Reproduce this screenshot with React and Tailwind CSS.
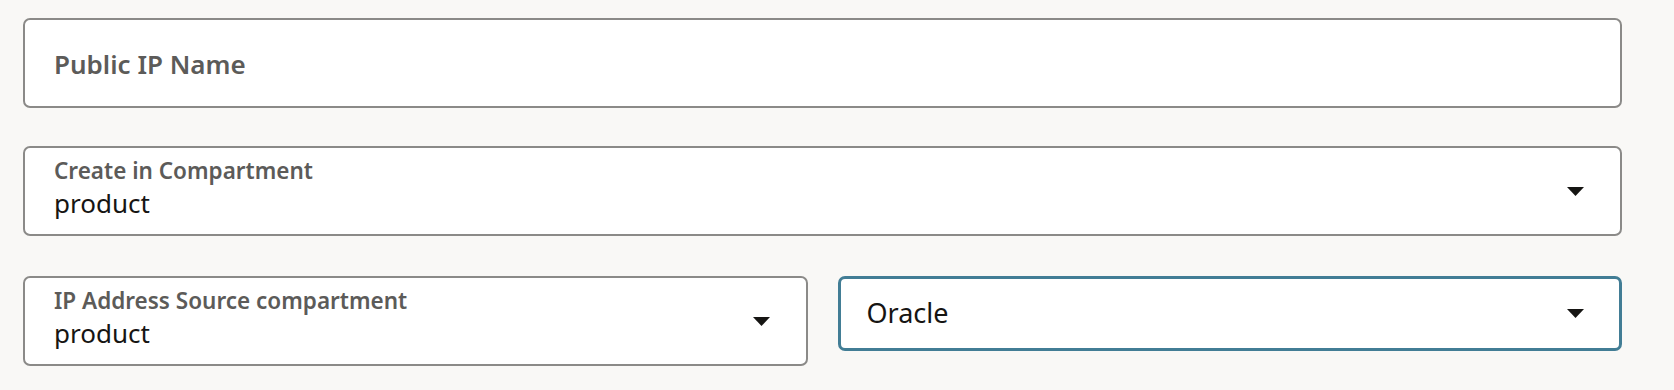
import React from 'react';

const font = { fontFamily: '"Noto Sans", "Open Sans", sans-serif' };

function Caret() {
  return (
    <svg width="17" height="9" viewBox="0 0 17 9" className="shrink-0">
      <path d="M0 0 L17 0 L8.5 9 Z" fill="#161513" />
    </svg>
  );
}

function SelectField({ label, value, className = '' }) {
  return (
    <div className={`h-[90px] bg-white border-2 border-[#8b8a88] rounded-[7px] flex items-center justify-between pl-[29px] pr-[36px] ${className}`}>
      <div className="flex flex-col pb-[9px]">
        <span className="text-[22.5px] leading-[33px] font-semibold text-[#5c5b59]">{label}</span>
        <span className="text-[26px] leading-[32px] text-[#161513]">{value}</span>
      </div>
      <Caret />
    </div>
  );
}

export default function App() {
  return (
    <div className="min-h-[390px] w-full bg-[#f9f8f6] pl-[23px] pr-[52px] pt-[18px]" style={font}>
      <div className="flex flex-col">
        <div className="h-[90px] bg-white border-2 border-[#8b8a88] rounded-[7px] flex items-center pl-[29px] pt-[2px]">
          <span className="text-[26px] font-semibold text-[#5c5b59]">Public IP Name</span>
        </div>

        <SelectField label="Create in Compartment" value="product" className="mt-[38px]" />

        <div className="mt-[40px] grid grid-cols-2 gap-[30px] items-start">
          <SelectField label="IP Address Source compartment" value="product" className="h-[89px]" />
          <div className="h-[75px] bg-white border-[3px] border-[#427d95] rounded-[7px] flex items-center justify-between pl-[26px] pr-[35px]">
            <span className="text-[27px] text-[#161513]">Oracle</span>
            <Caret />
          </div>
        </div>
      </div>
    </div>
  );
}
